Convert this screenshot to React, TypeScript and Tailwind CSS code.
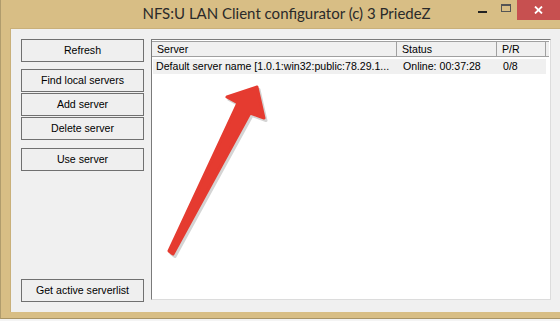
import React from "react";

const ui = { fontFamily: '"Liberation Sans", Arial, sans-serif' };
const title = { fontFamily: 'Lato, "Open Sans", sans-serif' };

function Btn({ label, className = "" }: { label: string; className?: string }) {
  return (
    <div
      className={
        "h-[23px] w-[123px] shrink-0 border border-[#707070] bg-[#efefef] flex items-center justify-center text-[10.6px] text-black " +
        className
      }
    >
      {label}
    </div>
  );
}

export default function App() {
  return (
    <div className="relative w-[560px] h-[321px] overflow-hidden bg-[#f4f4f4]" style={ui}>
      <div className="h-[319px] bg-[#d8be85] border-b border-[#a89466] flex flex-col pl-[9px] border-l border-l-[#b09c6d]">
        {/* title bar */}
        <div className="h-[28px] shrink-0 flex items-start">
          <div className="flex-1 h-[28px] flex items-center justify-center pl-[93px]">
            <span className="text-[15px] text-[#2a2a2a] leading-none -mt-[1px]" style={title}>
              NFS:U LAN Client configurator (c) 3 PriedeZ
            </span>
          </div>
          <div className="w-[24px] h-[20px] shrink-0 flex items-center justify-center">
            <div className="w-[9px] h-[2px] bg-[#222] mt-[4px]" />
          </div>
          <div className="w-[23px] h-[20px] shrink-0 flex items-center justify-center">
            <div className="w-[10px] h-[8px] border border-[#555] border-t-2 -mt-[4px]" />
          </div>
          <div className="w-[43px] h-[20px] shrink-0 bg-[#c75050] flex items-center justify-center">
            <svg width="9" height="8" viewBox="0 0 9 8">
              <path d="M1 0.5 L8 7.5 M8 0.5 L1 7.5" stroke="#ffffff" strokeWidth="1.8" />
            </svg>
          </div>
        </div>
        {/* client */}
        <div className="flex-1 mb-[6px] bg-[#f0f0f0] border-l border-t border-[#c9b07a] flex">
          <div className="flex flex-col pl-[10px] pt-[10px] pb-[10px]">
            <Btn label="Refresh" />
            <Btn label="Find local servers" className="mt-[7px]" />
            <Btn label="Add server" className="mt-[1px]" />
            <Btn label="Delete server" className="mt-[1px]" />
            <Btn label="Use server" className="mt-[8px]" />
            <Btn label="Get active serverlist" className="mt-auto" />
          </div>
          <div className="ml-[7px] mt-[10px] w-[400px] h-[261px] bg-white border-l border-t border-[#7a7a7a] border-r border-b border-r-[#dcdcdc] border-b-[#dcdcdc] pt-[1px] flex flex-col">
            <div className="flex h-[16px] text-[10.6px] text-black">
              <div className="w-[245px] bg-[#f0f0f0] border-t border-b border-[#a0a0a0] border-r border-r-[#a0a0a0] pl-[5px] leading-[14px]">Server</div>
              <div className="w-[100px] bg-[#f0f0f0] border-t border-b border-[#a0a0a0] border-r border-r-[#a0a0a0] pl-[5px] leading-[14px]">Status</div>
              <div className="w-[49px] bg-[#f0f0f0] border-t border-b border-[#a0a0a0] border-r border-r-[#a0a0a0] pl-[5px] leading-[14px]">P/R</div>
              <div className="w-[3px] bg-[#f0f0f0] border-t border-b border-[#a0a0a0]" />
            </div>
            <div className="flex mt-[2px] ml-[1px] w-[393px] h-[15px] bg-[#f0f0f0] text-[10.6px] text-black leading-[15px]">
              <div className="w-[244px] pl-[3px] whitespace-nowrap overflow-hidden">Default server name [1.0.1:win32:public:78.29.1...</div>
              <div className="w-[100px] pl-[6px] whitespace-nowrap">Online: 00:37:28</div>
              <div className="w-[49px] pl-[6px]">0/8</div>
            </div>
          </div>
        </div>
      </div>
      {/* annotation arrow */}
      <svg className="absolute left-[160px] top-[80px] pointer-events-none" width="115" height="185" viewBox="160 80 115 185">
        <polygon
          points="258,88 265,119 251,114 174,255 170,252 239,104 228,98"
          fill="#b8b8b8"
          stroke="#b8b8b8"
          strokeWidth="3"
          strokeLinejoin="round"
          transform="translate(1,1.5)"
          opacity="0.6"
        />
        <polygon
          points="257,87 264,118 250,113 173,254 169,251 238,103 227,97"
          fill="#e53b30"
          stroke="#e53b30"
          strokeWidth="3"
          strokeLinejoin="round"
        />
      </svg>
    </div>
  );
}
